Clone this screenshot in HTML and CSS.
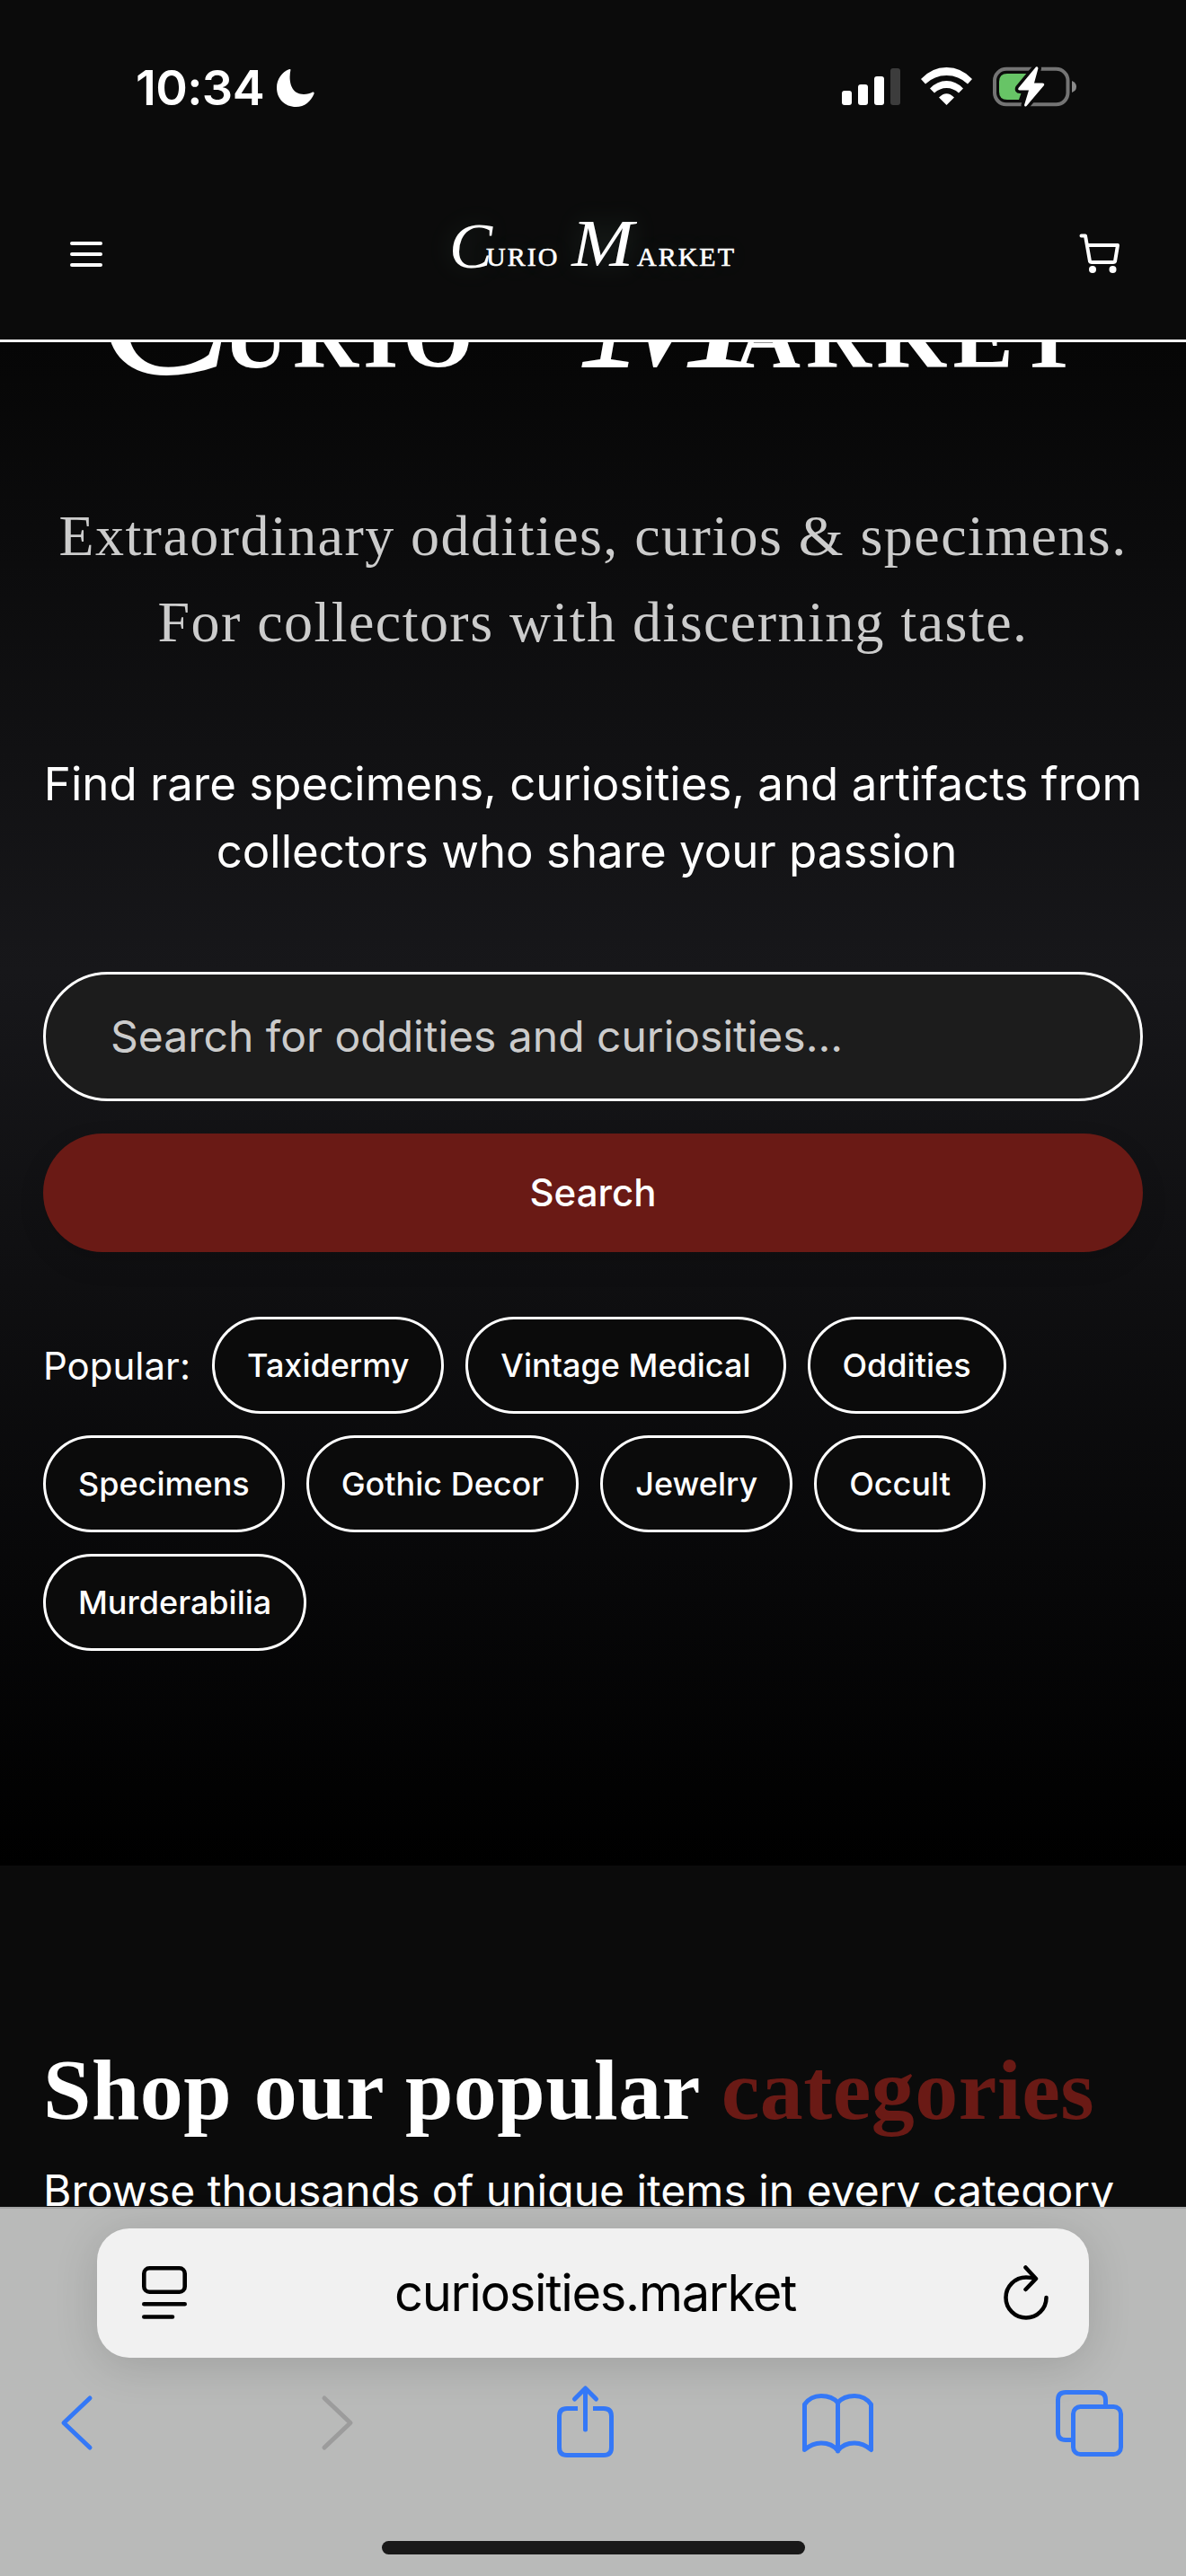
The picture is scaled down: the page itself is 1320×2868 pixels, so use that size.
FILE: index.html
```html
<!DOCTYPE html>
<html lang="en">
<head>
<meta charset="utf-8">
<title>Curio Market</title>
<link rel="stylesheet" href="styles.css">
</head>
<body>
<div class="screen">
  <header class="top">
    <div class="status">
      <div class="clock">
        <span class="time">10:34</span>
        <svg class="moon" width="42" height="42" viewBox="0 0 42 42"><path d="M15.500 .500C13 12 15 28 30 28C34 28 37.500 27 40 25.500Q42 25 41.500 27.500C38 36 31 42 21.500 42C9 42 0 33 0 20.500C0 11 6 3 13.500 .200Q15.500-.300 15.500 .500Z" fill="#fff"/></svg>
      </div>
      <svg class="indicators" width="262" height="48" viewBox="937 73 262 48">
        <g fill="#fff">
          <rect x="937" y="101" width="11" height="16" rx="3"/>
          <rect x="955" y="94" width="11" height="23" rx="3"/>
          <rect x="973" y="85" width="11" height="32" rx="3"/>
          <rect x="991" y="76" width="11" height="41" rx="3" fill="#3c3c3c"/>
          <path d="M1025 88Q1037 75 1053.500 75Q1070 75 1082 88L1077 93.500Q1067 84 1053.500 84Q1040 84 1030 93.500Z"/>
          <path d="M1035 98.500Q1043 90 1053.500 90Q1064 90 1072 98.500L1067 103.500Q1061 98 1053.500 98Q1046 98 1040 103.500Z"/>
          <path d="M1045 108.500Q1053.500 100 1062 108.500L1053.500 117Z"/>
        </g>
        <rect x="1107" y="76.800" width="81.500" height="39.500" rx="13" fill="none" stroke="#747474" stroke-width="4"/>
        <path d="M1193 90Q1198 92 1198 96.500Q1198 101 1193 103Z" fill="#8a8a8a"/>
        <path d="M1121 82H1144L1134 111H1121Q1112 111 1112 102V91Q1112 82 1121 82Z" fill="#67c466"/>
        <path d="M1153 74.500L1133.500 98Q1132.500 100.500 1135 100.500H1145L1140 117Q1140.500 119.500 1142.500 118L1162 95Q1163 92.500 1160 92.500H1151L1155.500 76Q1155 73.500 1153 74.500Z" fill="#fff" stroke="#0b0b0b" stroke-width="7" paint-order="stroke" stroke-linejoin="round"/>
      </svg>
    </div>
    <div class="nav">
      <svg width="36" height="28" viewBox="0 0 36 28"><path d="M2 2H34M2 14H34M2 26H34" stroke="#fff" stroke-width="4" stroke-linecap="round"/></svg>
      <div class="logo"><span class="cap cap-c">C</span><span class="rest rest-c">URIO</span><span class="cap cap-m">M</span><span class="rest rest-m">ARKET</span></div>
      <svg width="46" height="46" viewBox="0 0 46 46"><path d="M2.500 2.500H7L12 31Q12.500 32 14 32H38Q39.500 32 40 31L43 13H9" fill="none" stroke="#fff" stroke-width="4" stroke-linecap="round" stroke-linejoin="round"/><circle cx="15" cy="40" r="4" fill="#fff"/><circle cx="37.500" cy="40" r="4" fill="#fff"/></svg>
    </div>
  </header>

  <main class="page">
    <section class="hero">
      <div class="title"><span class="big big-c">C</span><span class="caps caps-c">URIO</span><span class="big big-m">M</span><span class="caps caps-m">ARKET</span></div>
      <p class="tagline"><span class="line1">Extraordinary oddities, curios &amp; specimens.</span><br><span class="line2">For collectors with discerning taste.</span></p>
      <p class="lead">Find rare specimens, curiosities, and artifacts from<br><span class="lead2">collectors who share your passion</span></p>
      <div class="field">Search for oddities and curiosities...</div>
      <div class="button">Search</div>
      <div class="tags">
        <span class="label">Popular:</span>
        <span class="chip">Taxidermy</span><span class="chip">Vintage Medical</span><span class="chip">Oddities</span>
        <span class="chip">Specimens</span><span class="chip">Gothic Decor</span><span class="chip">Jewelry</span><span class="chip">Occult</span>
        <span class="chip">Murderabilia</span>
      </div>
    </section>
    <section class="shop">
      <h2>Shop our popular <span class="accent">categories</span></h2>
      <p>Browse thousands of unique items in every category</p>
    </section>
  </main>

  <footer class="browser">
    <div class="address">
      <svg width="50" height="62" viewBox="0 0 50 62" fill="none" stroke="#000" stroke-width="4.600" stroke-linecap="round"><rect x="2.300" y="3.300" width="45.400" height="26.400" rx="6"/><path d="M2.300 43.300H47.700M2.300 57.500H34"/></svg>
      <span class="url">curiosities.market</span>
      <svg width="50" height="62" viewBox="1117.500 2519.500 50 62" fill="none" stroke="#000" stroke-width="4.500" stroke-linecap="round" stroke-linejoin="round"><path d="M1165 2555.500A22.500 22.500 0 1 1 1142.500 2533Q1148 2533 1153 2534.500M1142 2522L1153.500 2534.500L1142 2546.500"/></svg>
    </div>
    <svg class="tools" width="1320" height="90" viewBox="0 2650 1320 90" fill="none" stroke="#3478f7" stroke-width="5" stroke-linecap="round" stroke-linejoin="round">
      <path d="M100 2670L71 2697.500L100 2725"/>
      <path d="M361 2670L390 2697.500L361 2725" stroke="#9c9c9c"/>
      <path d="M643 2681.500H631Q622.500 2681.500 622.500 2690V2725Q622.500 2733.500 631 2733.500H672Q680.500 2733.500 680.500 2725V2690Q680.500 2681.500 672 2681.500H660" stroke-linecap="butt"/>
      <path d="M651.500 2705V2659M639.500 2671L651.500 2659L663.500 2671"/>
      <path d="M932.500 2675V2729M932.500 2675Q926 2667.500 914 2667.500Q902 2667.500 895.500 2677V2727.500Q904 2720 914 2720Q926 2720 932.500 2728.500Q939 2720 951 2720Q961 2720 969.500 2727.500V2677Q963 2667.500 951 2667.500Q939 2667.500 932.500 2675Z"/>
      <rect x="1194.500" y="2679.500" width="53" height="53" rx="8"/>
      <path d="M1230.500 2677V2672Q1230.500 2663.500 1222 2663.500H1186Q1177.500 2663.500 1177.500 2672V2708Q1177.500 2716.500 1186 2716.500H1192" stroke-linecap="butt"/>
    </svg>
    <div class="home"></div>
  </footer>
</div>
</body>
</html>
```
FILE: styles.css
```css
* { box-sizing: border-box; }
body { margin: 0; background: #0b0b0b; font-family: Inter, "Liberation Sans", sans-serif; color: #fff; }
p, h2 { margin: 0; }
svg { display: block; flex: none; }
.screen { width: 1320px; height: 2868px; overflow: hidden; display: flex; flex-direction: column; }

.top { height: 381px; flex: none; background: #0b0b0b; border-bottom: 3px solid #fff; position: relative; z-index: 1; }
.status { height: 188px; padding: 0 121px 0 151px; display: flex; justify-content: space-between; align-items: center; }
.clock { display: flex; align-items: center; gap: 14px; padding-top: 8px; }
.time { font-size: 54px; font-weight: 600; letter-spacing: -.6px; line-height: 66px; }
.indicators { margin-top: 6px; }
.nav { height: 190px; padding: 0 73px 0 78px; display: flex; justify-content: space-between; align-items: center; }
.logo { width: 320px; height: 80px; margin: 0 0 25px 5px; line-height: 80px; white-space: nowrap; font-family: "Liberation Serif", serif; text-shadow: 0 0 30px rgba(180,255,220,.15); display: flex; align-items: baseline; }
.logo span { flex: none; }
.cap { font-style: italic; font-size: 72px; }
.cap-c { width: 41px; transform: translateY(2px); }
.cap-m { width: 64px; font-size: 74px; transform: translateX(-1px) scaleX(1.12); transform-origin: 100% 50%; }
.rest { font-size: 30px; letter-spacing: 2px; -webkit-text-stroke: .6px #fff; }
.rest-c { width: 104px; }

.page { height: 2076px; flex: none; overflow: hidden; }
.hero { height: 1696px; padding: 0 48px; display: flex; flex-direction: column; background: linear-gradient(to bottom, #060606 0, #17171a 700px, #000 100%); }
.title { height: 217px; flex: none; margin: -49px 0 0 59px; display: flex; align-items: baseline; line-height: 0; font-family: "Liberation Serif", serif; white-space: nowrap; }
.title span { flex: none; }
.big { font-style: italic; font-size: 230px; }
.big-c { width: 141px; transform: translateY(7px); }
.big-m { width: 168px; }
.caps { font-weight: 700; font-size: 101px; letter-spacing: 5px; }
.caps-c { width: 402px; }
.caps-m { letter-spacing: 6px; }
.tagline { text-align: center; font: 64px/96px "Liberation Serif", serif; color: #ccc; white-space: nowrap; letter-spacing: 1.45px; }
.lead { margin-top: 94px; font-size: 51px; line-height: 75px; text-align: center; white-space: nowrap; }
.lead2 { padding-right: 14px; }
.field { flex: none; margin-top: 97px; height: 144px; border: 3px solid #fff; border-radius: 72px; background: #1c1c1c; color: #ccc; font-size: 48px; line-height: 138px; padding-left: 72px; }
.button { flex: none; margin-top: 36px; height: 132px; border-radius: 66px; background: #6a1a15; text-align: center; font-size: 42px; font-weight: 500; line-height: 132px; box-shadow: 0 12px 30px rgba(0,0,0,.12); }
.tags { margin-top: 72px; display: flex; flex-wrap: wrap; gap: 24px; align-items: center; }
.label { font-size: 42px; }
.chip { height: 108px; border: 3px solid #fff; border-radius: 54px; background: #0b0b0b; padding: 0 36px; font-size: 36px; font-weight: 500; line-height: 102px; white-space: nowrap; }

.shop { height: 380px; padding: 190px 48px 0; background: #0b0b0b; white-space: nowrap; }
.shop h2 { font: 700 96px/120px "Liberation Serif", serif; letter-spacing: .5px; }
.shop p { margin-top: 16px; font-size: 48px; line-height: 72px; }
.accent { color: #6a1a15; }

.browser { flex: none; height: 411px; border-top: 2px solid #a3a4a4; background: #b9bab9; display: flex; flex-direction: column; align-items: center; }
.address { width: 1104px; height: 144px; margin-top: 22px; padding: 0 45px 0 50px; border-radius: 36px; background: #f1f1f1; box-shadow: 0 8px 50px rgba(0,0,0,.14); color: #000; display: flex; justify-content: space-between; align-items: center; }
.url { font-size: 56px; line-height: 68px; letter-spacing: -1.3px; }
.tools { margin-top: 25px; }
.home { margin-top: 89px; width: 471px; height: 15px; border-radius: 8px; background: #191919; }
```
